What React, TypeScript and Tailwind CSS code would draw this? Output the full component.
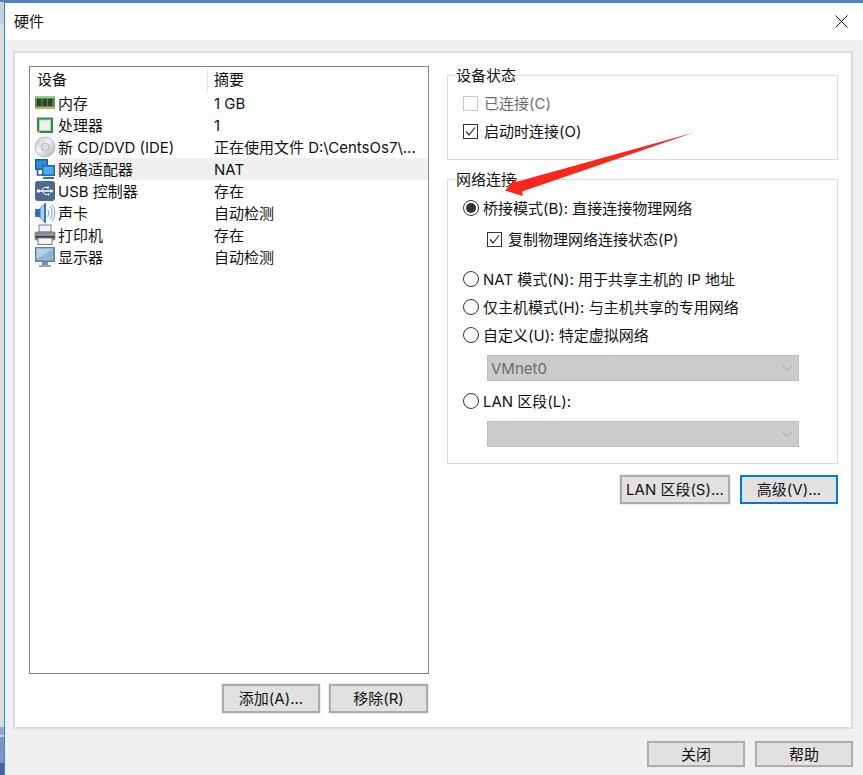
import React from "react";

const ICONS: Record<string, React.ReactNode> = {
  mem: (
    <svg width="22" height="22" viewBox="0 0 22 22">
      <rect x="1" y="4" width="20" height="13" fill="#4a9a4a" />
      <rect x="1" y="4" width="20" height="2" fill="#93d087" />
      <rect x="3" y="7" width="4.500" height="7" fill="#3a3d35" />
      <rect x="8.500" y="7" width="4.500" height="7" fill="#3a3d35" />
      <rect x="14" y="7" width="4.500" height="7" fill="#3a3d35" />
      <rect x="1" y="15" width="20" height="2" fill="#b9b765" />
    </svg>
  ),
  cpu: (
    <svg width="22" height="22" viewBox="0 0 22 22">
      <rect x="3" y="3.500" width="16" height="15.500" fill="#2c8f42" />
      <rect x="5.500" y="6" width="11" height="10.500" fill="#eef0ea" stroke="#c3cbbd" />
      <rect x="3" y="17.500" width="2.500" height="1.500" fill="#c5e0b0" />
    </svg>
  ),
  cd: (
    <svg width="22" height="22" viewBox="0 0 22 22">
      <defs>
        <linearGradient id="cdg" x1="0" y1="0" x2="1" y2="1">
          <stop offset="0" stopColor="#bfc3c8" />
          <stop offset="0.45" stopColor="#f1f2f4" />
          <stop offset="1" stopColor="#a9adb3" />
        </linearGradient>
      </defs>
      <circle cx="11" cy="11" r="10" fill="url(#cdg)" stroke="#b6babf" />
      <circle cx="11" cy="11" r="4" fill="#dfe1e4" stroke="#a6aaaf" strokeWidth="0.800" />
      <circle cx="11" cy="11" r="1.500" fill="#ffffff" stroke="#a8acb0" strokeWidth="0.600" />
    </svg>
  ),
  net: (
    <svg width="22" height="22" viewBox="0 0 22 22">
      <rect x="1" y="1" width="13" height="11" fill="#17609f" />
      <rect x="2.500" y="2.500" width="10" height="8" fill="#2f8fd8" />
      <path d="M3.500 12v5h5" fill="none" stroke="#1f5f9c" strokeWidth="1.700" />
      <rect x="8" y="7" width="13" height="11" fill="#2a659e" />
      <rect x="9.500" y="8.500" width="10" height="8" fill="#46b0ee" />
      <rect x="9" y="19" width="11" height="2" fill="#3070ac" />
    </svg>
  ),
  usb: (
    <svg width="22" height="22" viewBox="0 0 22 22">
      <rect x="1" y="1" width="20" height="20" rx="3" fill="#4e6a8c" />
      <path d="M3 11h15" stroke="#fff" strokeWidth="1.500" />
      <path d="M19.500 11l-3-2v4z" fill="#fff" />
      <circle cx="4.500" cy="11" r="1.700" fill="#fff" />
      <path d="M7 11l3-3.500h3M8 11l3 3.500h2.500" fill="none" stroke="#fff" strokeWidth="1" />
      <rect x="13" y="6.500" width="2" height="2" fill="#fff" />
      <circle cx="14.500" cy="14.500" r="1.100" fill="#fff" />
    </svg>
  ),
  snd: (
    <svg width="22" height="22" viewBox="0 0 22 22">
      <path d="M1.500 7.500h3.500L11.500 1v20L5 14.500H1.500z" fill="#2f6fb8" stroke="#28589a" strokeWidth="0.700" />
      <path d="M6.500 6L10 2.800v16.400L6.500 16z" fill="#a6d0f2" />
      <path d="M13.500 7c1.600 2.500 1.600 5.500 0 8M15.800 4.500c2.800 4 2.800 9 0 13M18 2.500c3.600 5.500 3.600 11.500 0 17" fill="none" stroke="#9cb4d2" strokeWidth="1.300" />
    </svg>
  ),
  prn: (
    <svg width="22" height="22" viewBox="0 0 22 22">
      <rect x="5" y="1" width="12" height="7" fill="#f2f3f5" stroke="#7b8088" />
      <rect x="1" y="8" width="20" height="8" rx="1" fill="#8b9099" stroke="#666b73" strokeWidth="0.700" />
      <rect x="1.500" y="12" width="19" height="2" fill="#3b3f46" />
      <rect x="4" y="14" width="14" height="6.500" fill="#f4f5f6" stroke="#7b8088" />
      <rect x="17" y="9.500" width="2" height="1.500" fill="#6ed46a" />
    </svg>
  ),
  dsp: (
    <svg width="22" height="22" viewBox="0 0 22 22">
      <rect x="1" y="1" width="20" height="15" fill="#5f7f9f" />
      <rect x="2.500" y="2.500" width="17" height="12" fill="#8fb6d6" />
      <path d="M2.500 2.500h17L2.500 13z" fill="#b4d2e6" />
      <rect x="8" y="16" width="6" height="3" fill="#7f8f9f" />
      <rect x="5" y="19" width="12" height="2" fill="#9aa6b2" />
    </svg>
  ),
};

const ROWS: [string, string, string][] = [
  ["mem", "内存", "1 GB"],
  ["cpu", "处理器", "1"],
  ["cd", "新 CD/DVD (IDE)", "正在使用文件 D:\\CentsOs7\\..."],
  ["net", "网络适配器", "NAT"],
  ["usb", "USB 控制器", "存在"],
  ["snd", "声卡", "自动检测"],
  ["prn", "打印机", "存在"],
  ["dsp", "显示器", "自动检测"],
];

function Btn({ w, h, primary, children }: { w: string; h: string; primary?: boolean; children: React.ReactNode }) {
  return (
    <div
      className={`${w} ${h} flex items-center justify-center ${
        primary ? "border-2 border-[#0078d7]" : "border-2 border-[#adadad] outline outline-1 outline-[#ececec]"
      } bg-[#e1e1e1] text-[15px] text-[#111]`}
    >
      <span className="pt-[2px]">{children}</span>
    </div>
  );
}

function Check({ checked, disabled }: { checked?: boolean; disabled?: boolean }) {
  return (
    <div
      className={`w-[15px] h-[15px] shrink-0 flex items-center justify-center border ${
        disabled ? "border-[#c8c8c8]" : "border-[#333]"
      } bg-white`}
    >
      {checked && (
        <svg width="13" height="13" viewBox="0 0 13 13">
          <path d="M2 6.500l3 3.500 6-7.500" fill="none" stroke="#333" strokeWidth="1.200" />
        </svg>
      )}
    </div>
  );
}

function Radio({ on }: { on?: boolean }) {
  return (
    <div className="w-[16px] h-[16px] shrink-0 rounded-full border border-[#333] bg-white flex items-center justify-center">
      {on && <div className="w-[10px] h-[10px] rounded-full bg-[#333]" />}
    </div>
  );
}

function Select({ label }: { label?: string }) {
  return (
    <div className="ml-[39px] w-[312px] h-[26px] bg-[#cccccc] border border-[#bfbfbf] flex items-center justify-between pl-[3px] pr-[4px] text-[15px] text-[#6d6d6d]">
      <span className="pt-[2px]">{label}</span>
      <svg width="14" height="14" viewBox="0 0 14 14">
        <path d="M2 4.500l5 5 5-5" fill="none" stroke="#a4a4a4" strokeWidth="1" />
      </svg>
    </div>
  );
}

export default function App() {
  return (
    <div className="relative w-[863px] h-[775px] overflow-hidden [font-family:'Inter','Noto_Sans_CJK_SC',sans-serif] text-[15px] text-[#111] flex flex-col">
      <div className="h-[2px] shrink-0 bg-[#5f7db8]" />
      <div className="flex-1 flex min-h-0">
        <div className="w-[4px] shrink-0 flex flex-col">
          <div className="h-[22px] bg-[#c6d0e0]" />
          <div className="flex-1 bg-[#dcdcdc]" />
          <div className="h-[8px] bg-[#98a8cd]" />
          <div className="h-[2px] bg-[#c8cfd8]" />
          <div className="h-[26px] bg-[#8091c3]" />
          <div className="h-[12px] bg-[#4f5f9f]" />
        </div>
        <div className="flex-1 min-w-0 flex flex-col border-l border-t border-[#2a8cec] bg-[#f0f0f0]">
          {/* Title bar */}
          <div className="h-[37px] shrink-0 bg-white flex items-center justify-between pl-[9px] pr-[15px] pt-[1px]">
            <span>硬件</span>
            <svg className="mb-[2px]" width="13" height="13" viewBox="0 0 13 13">
              <path d="M0.500 0.500l12 12M12.500 0.500l-12 12" stroke="#111" strokeWidth="1" />
            </svg>
          </div>
          {/* Body */}
          <div className="flex-1 flex flex-col pl-[8px] pt-[11px] pb-[8px] pr-[10px]">
            <div className="h-[678px] shrink-0 bg-white border-2 border-[#dcdcdc] pl-[14px] pr-[13px] pt-[13px] flex gap-[18px]">
              {/* Left */}
              <div className="w-[400px] shrink-0 flex flex-col">
                <div className="h-[608px] border border-[#83878c] flex flex-col">
                  <div className="h-[25px] shrink-0 flex items-center relative">
                    <div className="w-[178px] h-[24px] border-r border-[#e5e5e5] pl-[7px] flex items-center">
                      <span className="pt-[2px]">设备</span>
                    </div>
                    <div className="pl-[6px] pt-[2px]">摘要</div>
                  </div>
                  {ROWS.map(([icon, name, sum]) => (
                    <div key={name} className="h-[22px] shrink-0 flex items-center pl-[4px]">
                      <div className="w-[22px] h-[22px] shrink-0">{ICONS[icon]}</div>
                      <div
                        className={`flex-1 h-[22px] flex items-center ${
                          name === "网络适配器" ? "bg-[#f0f0f0]" : ""
                        }`}
                      >
                        <div className="w-[158px] pl-[2px] pt-[2px] whitespace-nowrap">{name}</div>
                        <div className="pt-[2px] whitespace-nowrap">{sum}</div>
                      </div>
                    </div>
                  ))}
                </div>
                <div className="mt-[10px] flex justify-end gap-[9px] pr-[1px]">
                  <Btn w="w-[98px]" h="h-[29px]">添加(A)...</Btn>
                  <Btn w="w-[99px]" h="h-[29px]">移除(R)</Btn>
                </div>
              </div>
              {/* Right */}
              <div className="w-[391px] shrink-0 flex flex-col pt-0 -mt-[1px]">
                <fieldset className="h-[95px] border border-[#dcdcdc] flex flex-col">
                  <legend className="ml-[8px] h-[20px] leading-[22px]">设备状态</legend>
                  <div className="flex items-center gap-[6px] h-[28px] mt-[4px] pl-[15px] text-[#6d6d6d]">
                    <Check disabled />
                    <span className="pt-[2px]">已连接(C)</span>
                  </div>
                  <div className="flex items-center gap-[6px] h-[28px] pl-[15px]">
                    <Check checked />
                    <span className="pt-[2px]">启动时连接(O)</span>
                  </div>
                </fieldset>
                <fieldset className="mt-[9px] h-[295px] border border-[#dcdcdc] flex flex-col">
                  <legend className="ml-[8px] h-[20px] leading-[22px]">网络连接</legend>
                  <div className="flex items-center gap-[4px] h-[28px] mt-[5px] pl-[15px]">
                    <Radio on />
                    <span className="pt-[2px]">桥接模式(B): 直接连接物理网络</span>
                  </div>
                  <div className="flex items-center gap-[6px] h-[28px] mt-[3px] pl-[39px]">
                    <Check checked />
                    <span className="pt-[2px]">复制物理网络连接状态(P)</span>
                  </div>
                  <div className="flex items-center gap-[4px] h-[28px] mt-[12px] pl-[15px]">
                    <Radio />
                    <span className="pt-[2px]">NAT 模式(N): 用于共享主机的 IP 地址</span>
                  </div>
                  <div className="flex items-center gap-[4px] h-[28px] pl-[15px]">
                    <Radio />
                    <span className="pt-[2px]">仅主机模式(H): 与主机共享的专用网络</span>
                  </div>
                  <div className="flex items-center gap-[4px] h-[28px] pl-[15px]">
                    <Radio />
                    <span className="pt-[2px]">自定义(U): 特定虚拟网络</span>
                  </div>
                  <div className="mt-[6px]">
                    <Select label="VMnet0" />
                  </div>
                  <div className="flex items-center gap-[4px] h-[28px] mt-[6px] pl-[15px]">
                    <Radio />
                    <span className="pt-[2px]">LAN 区段(L):</span>
                  </div>
                  <div className="mt-[6px]">
                    <Select />
                  </div>
                </fieldset>
                <div className="mt-[11px] flex justify-end gap-[10px]">
                  <Btn w="w-[110px]" h="h-[29px]">LAN 区段(S)...</Btn>
                  <Btn w="w-[98px]" h="h-[29px]" primary>高级(V)...</Btn>
                </div>
              </div>
            </div>
            <div className="mt-[12px] flex justify-end gap-[10px]">
              <Btn w="w-[98px]" h="h-[26px]">关闭</Btn>
              <Btn w="w-[98px]" h="h-[26px]">帮助</Btn>
            </div>
          </div>
        </div>
      </div>
      {/* Red annotation arrow drawn over the dialog */}
      <svg className="absolute left-0 top-0 pointer-events-none" width="863" height="775" viewBox="0 0 863 775">
        <polygon points="694,132.500 522,191.500 523,196 505,190.500 517,177 516,182" fill="#f9261c" />
      </svg>
    </div>
  );
}
